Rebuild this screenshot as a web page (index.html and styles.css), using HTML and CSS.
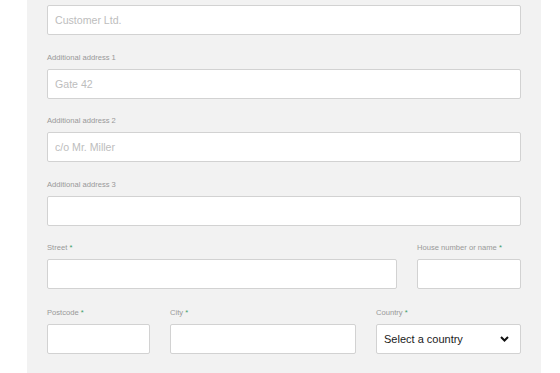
FILE: index.html
```html
<!DOCTYPE html>
<html lang="en">

<head>
  <meta charset="UTF-8">
  <meta name="viewport" content="width=device-width, initial-scale=1.0">
  <title>Address</title>
  <link rel="stylesheet" href="styles.css">
</head>

<body>
  <div class="address-panel">
    <div class="field">
      <input type="text" placeholder="Customer Ltd.">
    </div>

    <div class="field">
      <label>Additional address 1</label>
      <input type="text" placeholder="Gate 42">
    </div>

    <div class="field">
      <label>Additional address 2</label>
      <input type="text" placeholder="c/o Mr. Miller">
    </div>

    <div class="field">
      <label>Additional address 3</label>
      <input type="text">
    </div>

    <div class="row row-street">
      <div class="field">
        <label>Street <span class="req">*</span></label>
        <input type="text">
      </div>
      <div class="field">
        <label>House number or name <span class="req">*</span></label>
        <input type="text">
      </div>
    </div>

    <div class="row row-city">
      <div class="field">
        <label>Postcode <span class="req">*</span></label>
        <input type="text">
      </div>
      <div class="field">
        <label>City <span class="req">*</span></label>
        <input type="text">
      </div>
      <div class="field">
        <label>Country <span class="req">*</span></label>
        <div class="select-wrap">
          <select>
            <option>Select a country</option>
          </select>
          <svg class="chevron" width="9" height="6" viewBox="0 0 9 6">
            <path d="M1 1 L4.5 4.5 L8 1" fill="none" stroke="#111" stroke-width="2" />
          </svg>
        </div>
      </div>
    </div>
  </div>
</body>

</html>
```

FILE: styles.css
```css
body {
  margin: 0;
  background: #fff;
  font-family: "Liberation Sans", Arial, sans-serif;
}

.address-panel {
  margin-left: 27px;
  width: 514px;
  box-sizing: border-box;
  padding: 5px 20px 19px;
  background: #f2f2f2;
  min-height: 373px;
}

.field {
  margin-bottom: 17.6px;
}

.field label {
  display: block;
  font-size: 7.6px;
  line-height: 10px;
  color: #999;
  margin-bottom: 6px;
}

.req {
  color: #3fa06a;
}

.field input,
.field select {
  display: block;
  width: 100%;
  height: 30px;
  box-sizing: border-box;
  border: 1px solid #d2d2d2;
  border-radius: 2px;
  background: #fff;
  font-family: inherit;
  font-size: 10.6px;
  padding: 0 7px;
  outline: none;
}

.field input::placeholder {
  color: #bdbdbd;
}

.row {
  display: grid;
  column-gap: 20px;
}

.row .field {
  margin-bottom: 0;
}

.row-street {
  grid-template-columns: 1fr 104px;
  margin-bottom: 19px;
}

.row-city {
  grid-template-columns: 103px 186px 1fr;
}

.select-wrap {
  position: relative;
}

.field select {
  appearance: none;
  -webkit-appearance: none;
  color: #1a1a1a;
  font-size: 11px;
}

.chevron {
  position: absolute;
  right: 12px;
  top: 12px;
  pointer-events: none;
}
```
